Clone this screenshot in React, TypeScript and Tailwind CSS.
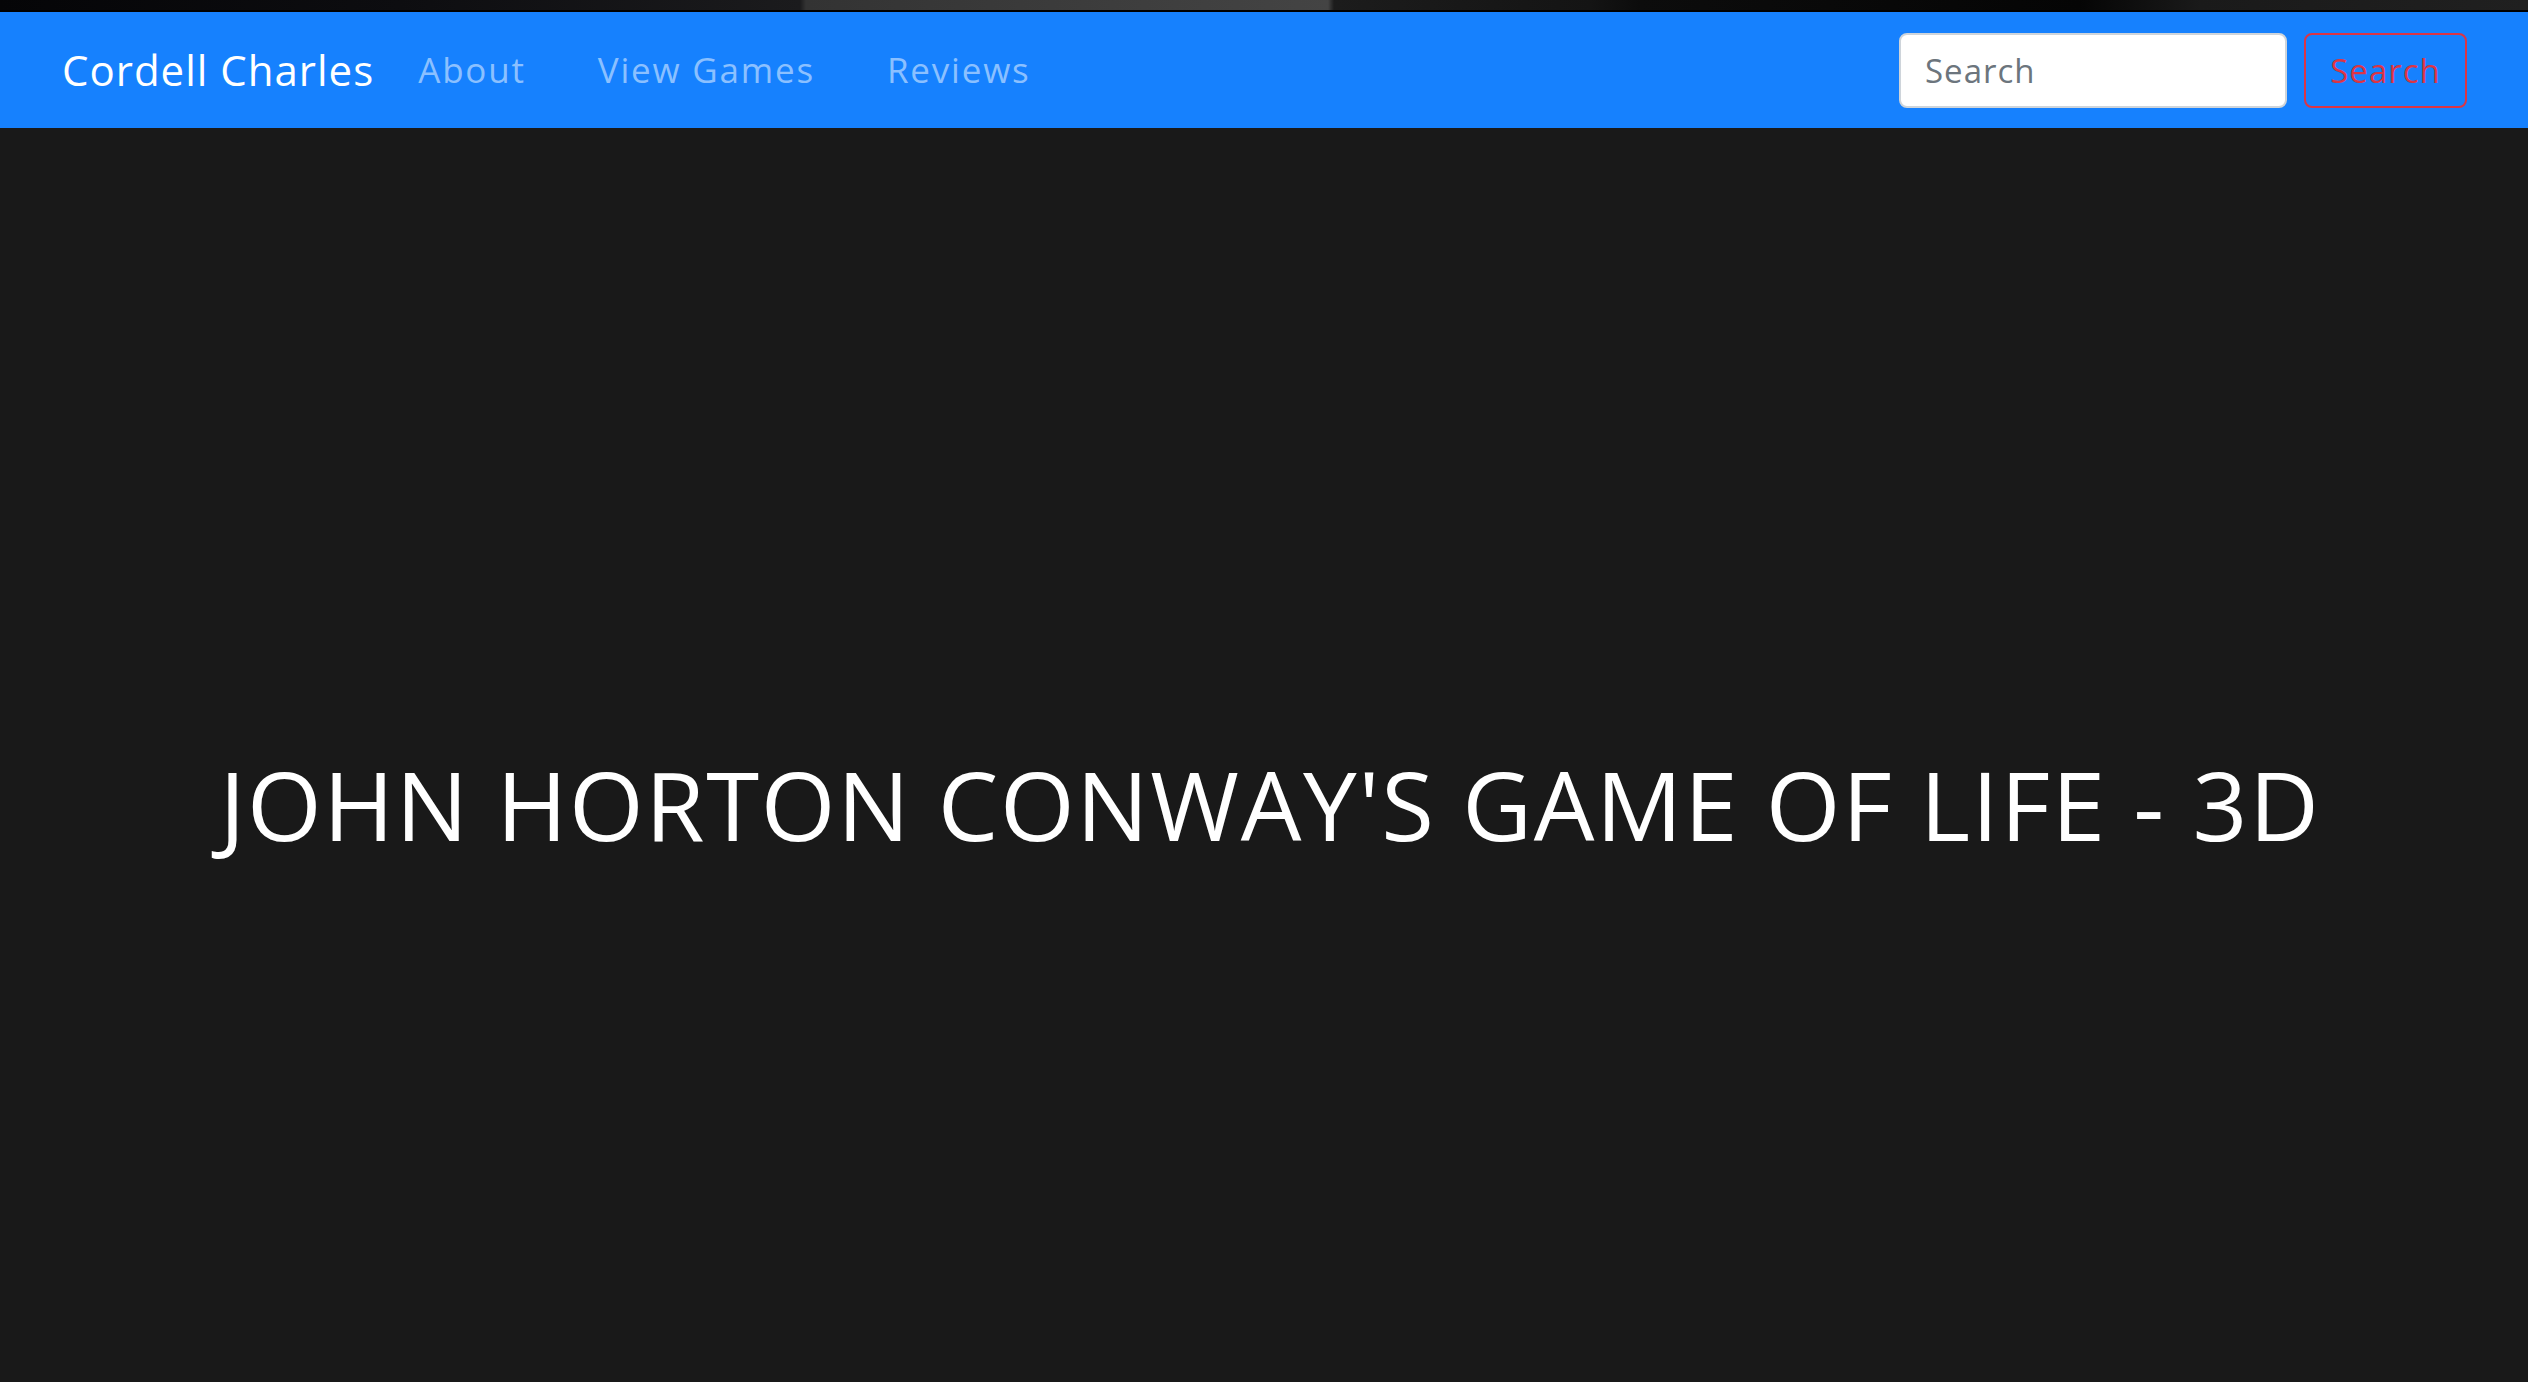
export default function App() {
    const links = ["About", "View Games", "Reviews"];

    return (
        <div className="min-h-screen flex flex-col bg-[#191919] font-['Open_Sans',sans-serif] font-medium">
            {/* Top strip */}
            <div className="h-[12px] border-b-2 border-black bg-[linear-gradient(90deg,#050507_0px,#0d0d10_400px,#1b1b1d_800px,#333333_806px,#444444_1328px,#1c1c1c_1334px,#141414_1590px,#0c0c0c_1640px,#050505_2080px,#1a1a1a_2200px,#202020_2528px)]" />

            {/* Navbar */}
            <nav className="h-[116px] bg-[#1681fe] flex items-center pl-[62px] pr-[61px]">
                <a href="#" className="text-white text-[42px] leading-none mr-[44px] tracking-[1px]">
                    Cordell Charles
                </a>
                <ul className="flex items-center gap-[72px]">
                    {links.map((l) => (
                        <li key={l}>
                            <a href="#" className="text-[#8bc0ff] text-[35px] leading-none tracking-[1.8px]">
                                {l}
                            </a>
                        </li>
                    ))}
                </ul>

                <form className="ml-auto flex items-center gap-[17px]">
                    <input
                        type="text"
                        placeholder="Search"
                        className="w-[388px] h-[75px] bg-white border-2 border-[#ced4da] rounded-[8px] px-[24px] text-[33px] tracking-[1px] text-[#495057] placeholder:text-[#6c757d] outline-none"
                    />
                    <button
                        type="button"
                        className="w-[163px] h-[75px] border-2 border-[#dc3545] rounded-[8px] text-[#dc3545] text-[33px] tracking-[1px] leading-none"
                    >
                        Search
                    </button>
                </form>
            </nav>

            {/* Hero */}
            <main className="flex-1 flex justify-center pt-[618px] pl-[12px]">
                <h1 className="text-white text-[96px] leading-[1.2] uppercase tracking-[1.7px]">
                    John Horton Conway's Game of Life - 3D
                </h1>
            </main>
        </div>
    );
}
